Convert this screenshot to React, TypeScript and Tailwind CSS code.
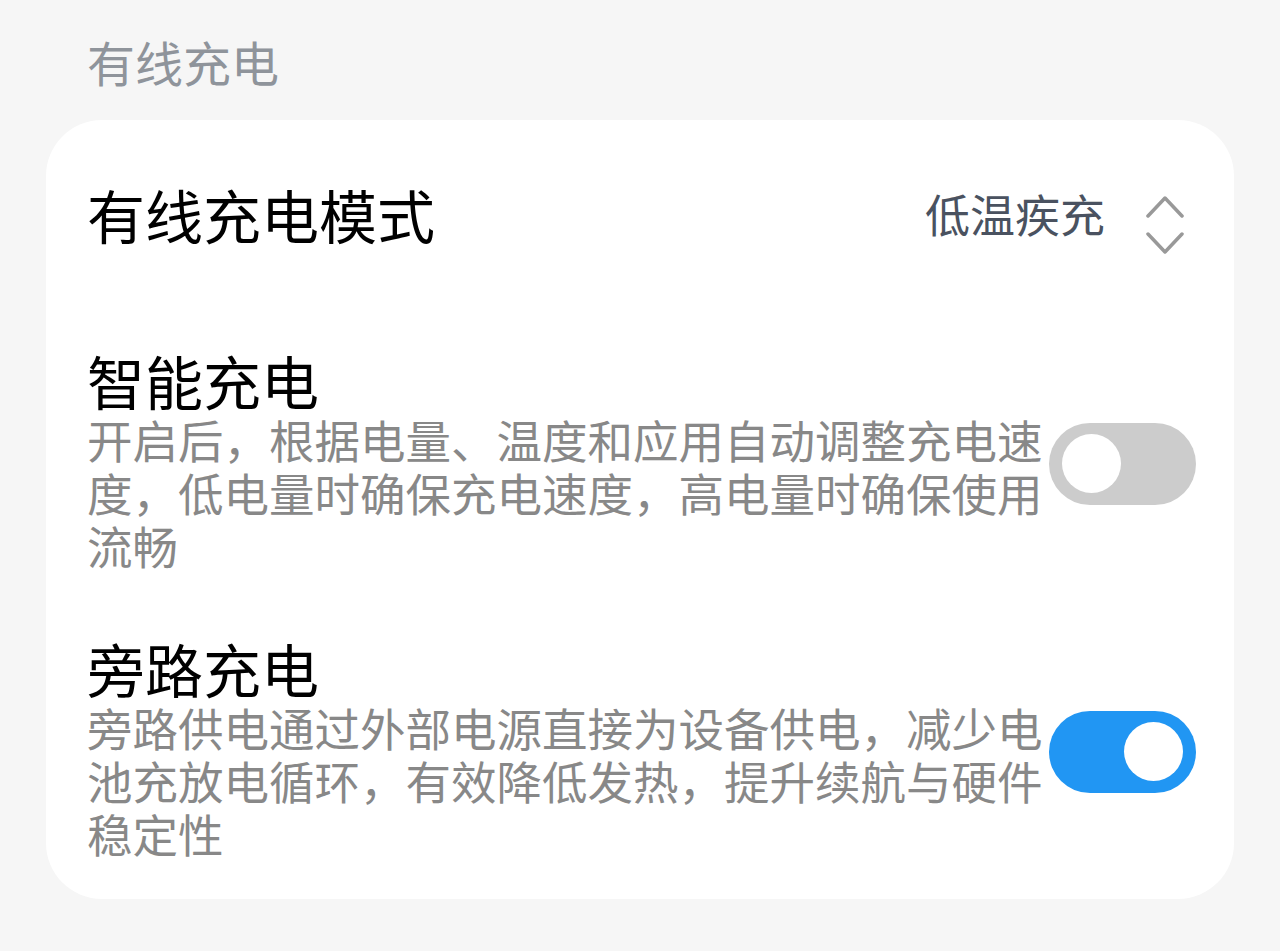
import { useState } from "react";

function Toggle({ on, onChange }: { on: boolean; onChange: () => void }) {
  return (
    <button
      type="button"
      onClick={onChange}
      className={
        "mt-[8px] flex h-[82px] w-[147px] shrink-0 items-center rounded-full px-[13px] " +
        (on ? "justify-end bg-[#2196f3]" : "justify-start bg-[#cccccc]")
      }
    >
      <span className="block h-[59px] w-[59px] rounded-full bg-white" />
    </button>
  );
}

function UpDownIcon() {
  return (
    <svg width="38" height="58" viewBox="0 0 38 58" fill="none" className="mt-[11px] -mb-[11px]">
      <path
        d="M2 20 L19 2 L36 20"
        stroke="#999999"
        strokeWidth="3.5"
        strokeLinecap="round"
        strokeLinejoin="round"
      />
      <path
        d="M2 38 L19 56 L36 38"
        stroke="#999999"
        strokeWidth="3.5"
        strokeLinecap="round"
        strokeLinejoin="round"
      />
    </svg>
  );
}

export default function App() {
  const [smart, setSmart] = useState(false);
  const [bypass, setBypass] = useState(true);

  return (
    <div
      className="h-[951px] w-full bg-[#f6f6f6] px-[46px]"
      style={{ fontFamily: '"Noto Sans CJK SC", "Noto Sans", sans-serif' }}
    >
      <p className="pl-[41px] pt-[33px] pb-[31px] text-[48px] leading-[56px] text-[#8f949b]">
        有线充电
      </p>

      <div className="flex flex-col rounded-[56px] bg-white pt-[61px] pb-[39px] pl-[41px] pr-[38px]">
        <div className="mb-[100px] flex items-center justify-between">
          <p className="text-[58px] leading-[66px] text-black">有线充电模式</p>
          <div className="mr-[12px] flex items-center gap-[41px]">
            <span className="text-[45px] leading-[56px] text-[#4a5260]">低温疾充</span>
            <UpDownIcon />
          </div>
        </div>

        <div className="mb-[63px] flex items-center">
          <div className="flex-1">
            <p className="text-[58px] leading-[66px] text-black">智能充电</p>
            <p className="text-[45.5px] leading-[53px] text-[#888888]">
              开启后，根据电量、温度和应用自动调整充电速度，低电量时确保充电速度，高电量时确保使用流畅
            </p>
          </div>
          <Toggle on={smart} onChange={() => setSmart(!smart)} />
        </div>

        <div className="flex items-center">
          <div className="flex-1">
            <p className="text-[58px] leading-[66px] text-black">旁路充电</p>
            <p className="text-[45.5px] leading-[53px] text-[#888888]">
              旁路供电通过外部电源直接为设备供电，减少电池充放电循环，有效降低发热，提升续航与硬件稳定性
            </p>
          </div>
          <Toggle on={bypass} onChange={() => setBypass(!bypass)} />
        </div>
      </div>
    </div>
  );
}
